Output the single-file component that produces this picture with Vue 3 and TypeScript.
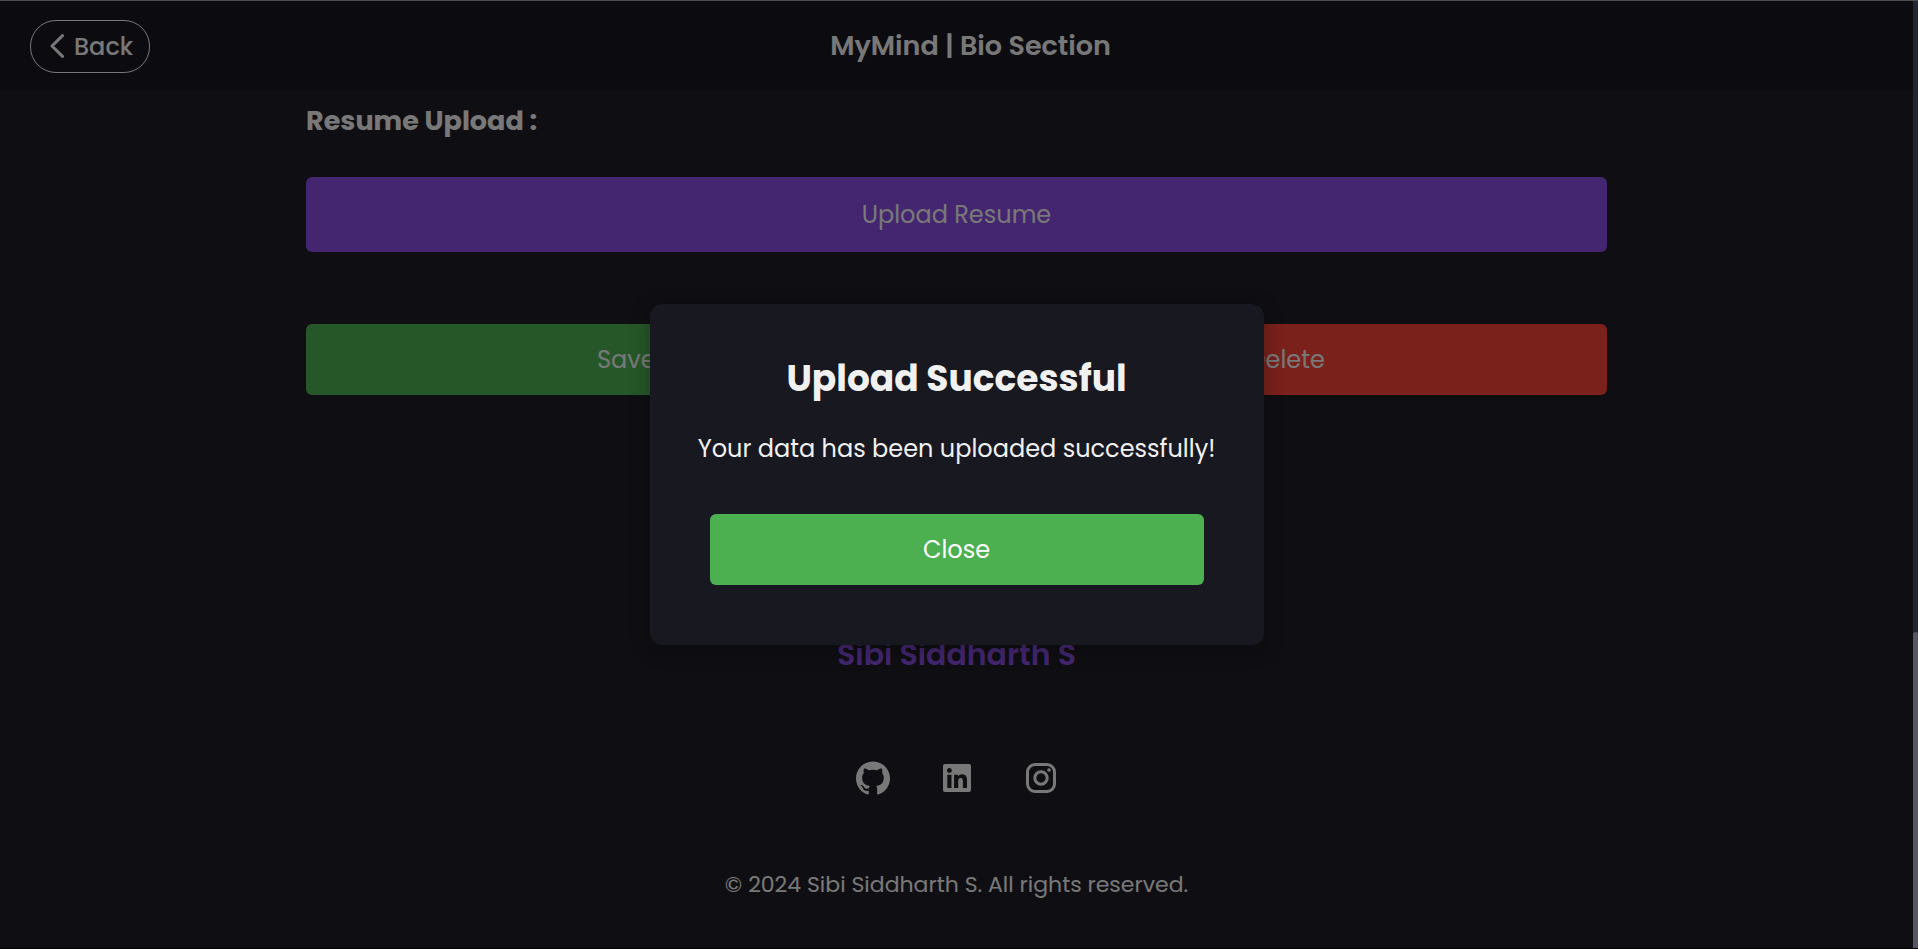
<script setup lang="ts">
import { ref } from 'vue'

const modalOpen = ref<boolean>(true)

function closeModal(): void {
  modalOpen.value = false
}
</script>

<template>
  <div class="shell">
    <div class="page">
      <header class="topbar">
        <button type="button" class="back">
          <svg class="chevron" viewBox="0 0 14 24" aria-hidden="true">
            <path d="M12.500 1.600 2 12l10.500 10.400" />
          </svg>
          Back
        </button>
        <h1 class="title">MyMind | Bio Section</h1>
        <span class="topbar-end"></span>
      </header>

      <main class="content">
        <h2 class="label">Resume Upload :</h2>
        <button type="button" class="upload">Upload Resume</button>
        <div class="actions">
          <button type="button" class="action save">Save</button>
          <button type="button" class="action delete">Delete</button>
        </div>
      </main>

      <footer class="footer">
        <p class="name">Sibi Siddharth S</p>
        <nav class="social">
          <a href="#github" aria-label="GitHub">
            <svg viewBox="0 0 24 24" class="github">
              <path d="M12 .297c-6.630 0-12 5.373-12 12 0 5.303 3.438 9.800 8.205 11.385.6.113.82-.258.82-.577 0-.285-.01-1.040-.015-2.040-3.338.724-4.042-1.610-4.042-1.610C4.422 18.070 3.633 17.700 3.633 17.700c-1.087-.744.084-.729.084-.729 1.205.084 1.838 1.236 1.838 1.236 1.070 1.835 2.809 1.305 3.495.998.108-.776.417-1.305.76-1.605-2.665-.3-5.466-1.332-5.466-5.930 0-1.310.465-2.380 1.235-3.220-.135-.303-.54-1.523.105-3.176 0 0 1.005-.322 3.300 1.230.96-.267 1.980-.399 3-.405 1.020.006 2.040.138 3 .405 2.280-1.552 3.285-1.230 3.285-1.230.645 1.653.24 2.873.12 3.176.765.84 1.230 1.910 1.230 3.220 0 4.610-2.805 5.625-5.475 5.920.42.36.81 1.096.81 2.220 0 1.606-.015 2.896-.015 3.286 0 .315.21.69.825.57C20.565 22.092 24 17.592 24 12.297c0-6.627-5.373-12-12-12" />
            </svg>
          </a>
          <a href="#linkedin" aria-label="LinkedIn">
            <svg viewBox="0 32 448 448" class="linkedin">
              <path d="M416 32H31.900C14.300 32 0 46.500 0 64.300v383.400C0 465.500 14.300 480 31.900 480H416c17.600 0 32-14.500 32-32.300V64.300c0-17.800-14.400-32.300-32-32.300zM135.400 416H69V202.200h66.500V416zm-33.200-243c-21.300 0-38.500-17.300-38.500-38.500S80.900 96 102.200 96c21.200 0 38.500 17.300 38.500 38.500 0 21.300-17.200 38.500-38.500 38.500zm282.100 243h-66.400V312c0-24.800-.5-56.700-34.500-56.700-34.600 0-39.900 27-39.900 54.900V416h-66.400V202.200h63.700v29.200h.9c8.900-16.800 30.600-34.500 62.900-34.500 67.200 0 79.700 44.300 79.700 101.900V416z" />
            </svg>
          </a>
          <a href="#instagram" aria-label="Instagram">
            <svg viewBox="0 0 30 30" class="instagram">
              <rect x="1.500" y="1.500" width="27" height="27" rx="7.500" />
              <circle cx="15" cy="15" r="6.200" />
              <circle cx="23" cy="7" r="1.800" class="dot" />
            </svg>
          </a>
        </nav>
        <p class="copyright">© 2024 Sibi Siddharth S. All rights reserved.</p>
      </footer>

      <div v-if="modalOpen" class="overlay">
        <section class="modal" role="dialog" aria-modal="true" aria-labelledby="modal-title">
          <h2 id="modal-title" class="modal-title">Upload Successful</h2>
          <p class="modal-text">Your data has been uploaded successfully!</p>
          <button type="button" class="action close" @click="closeModal">Close</button>
        </section>
      </div>
    </div>

    <div class="scroll-track" aria-hidden="true">
      <div class="scroll-thumb"></div>
    </div>
  </div>
</template>

<style>
body {
  margin: 0;
  background: #000;
}
</style>

<style scoped>
.shell {
  box-sizing: border-box;
  display: flex;
  min-height: 100vh;
  border-top: 1px solid #4e4e50;
  border-bottom: 1px solid #000;
  font-family: Poppins, Inter, "Liberation Sans", sans-serif;
  color: #f1f1f1;
}

h1,
h2,
p {
  margin: 0;
}

button {
  font-family: inherit;
  color: inherit;
  border: 0;
  cursor: pointer;
}

.page {
  position: relative;
  flex: 1;
  display: flex;
  flex-direction: column;
  background: #1e1d24;
}

.topbar {
  box-sizing: border-box;
  display: flex;
  justify-content: space-between;
  align-items: center;
  min-height: 90px;
  padding: 0 30px;
  background: #191720;
}

.back {
  display: flex;
  align-items: center;
  gap: 10px;
  padding: 11px 16px 11px 19px;
  border: 1px solid #f1f1f1;
  border-radius: 26px;
  background: transparent;
  font-size: 24px;
  font-weight: 500;
  line-height: 29px;
}

.chevron {
  width: 14px;
  height: 24px;
  fill: none;
  stroke: currentColor;
  stroke-width: 3;
  stroke-linecap: round;
  stroke-linejoin: round;
}

.title {
  font-size: 27px;
  font-weight: 600;
  line-height: 36px;
}

.topbar-end {
  width: 92px;
}

.content {
  display: flex;
  flex-direction: column;
  width: 68%;
  margin: 0 auto;
  padding-top: 12px;
}

.label {
  margin-bottom: 38px;
  font-size: 27px;
  font-weight: 700;
  line-height: 36px;
}

.upload {
  padding: 20px;
  border-radius: 6px;
  background: #864cde;
  font-size: 24px;
  line-height: 35px;
}

.actions {
  display: grid;
  grid-template-columns: 1fr 1fr;
  gap: 20px;
  margin-top: 72px;
}

.action {
  padding: 18px;
  border-radius: 6px;
  font-size: 24px;
  line-height: 35px;
}

.save {
  background: #4caf50;
}

.delete {
  background: #f44336;
}

.footer {
  display: flex;
  flex-direction: column;
  align-items: center;
  margin-top: auto;
  padding-bottom: 48px;
}

.name {
  font-size: 30px;
  font-weight: 600;
  line-height: 44px;
  color: #864cde;
}

.social {
  display: flex;
  gap: 50px;
  margin: 84px 0 75px;
}

.social a {
  display: flex;
  align-items: center;
  justify-content: center;
  width: 34px;
  height: 34px;
  color: inherit;
}

.social svg {
  fill: currentColor;
}

.github {
  width: 34px;
  height: 34px;
}

.linkedin {
  width: 28px;
  height: 28px;
}

.social .instagram {
  width: 30px;
  height: 30px;
  fill: none;
  stroke: currentColor;
  stroke-width: 3;
}

.instagram .dot {
  fill: currentColor;
  stroke: none;
}

.copyright {
  font-size: 22px;
  line-height: 30px;
}

.overlay {
  position: absolute;
  inset: 0;
  display: flex;
  align-items: center;
  justify-content: center;
  background: rgba(0, 0, 0, 0.5);
}

.modal {
  box-sizing: border-box;
  display: flex;
  flex-direction: column;
  width: 614px;
  max-width: 100%;
  padding: 50px 48px 60px;
  border-radius: 12px;
  background: #181820;
  box-shadow: 0 4px 20px rgba(0, 0, 0, 0.3);
  text-align: center;
}

.modal-title {
  margin-bottom: 27px;
  font-size: 36px;
  font-weight: 700;
  line-height: 50px;
}

.modal-text {
  margin-bottom: 47px;
  font-size: 24px;
  line-height: 36px;
}

.close {
  margin: 0 12px;
  background: #4caf50;
  color: #fff;
}

.scroll-track {
  display: flex;
  flex-direction: column;
  justify-content: flex-end;
  width: 5px;
  background: #1f2733;
}

.scroll-thumb {
  height: 33.4%;
  border-radius: 3px 3px 0 0;
  background: #555764;
}
</style>
